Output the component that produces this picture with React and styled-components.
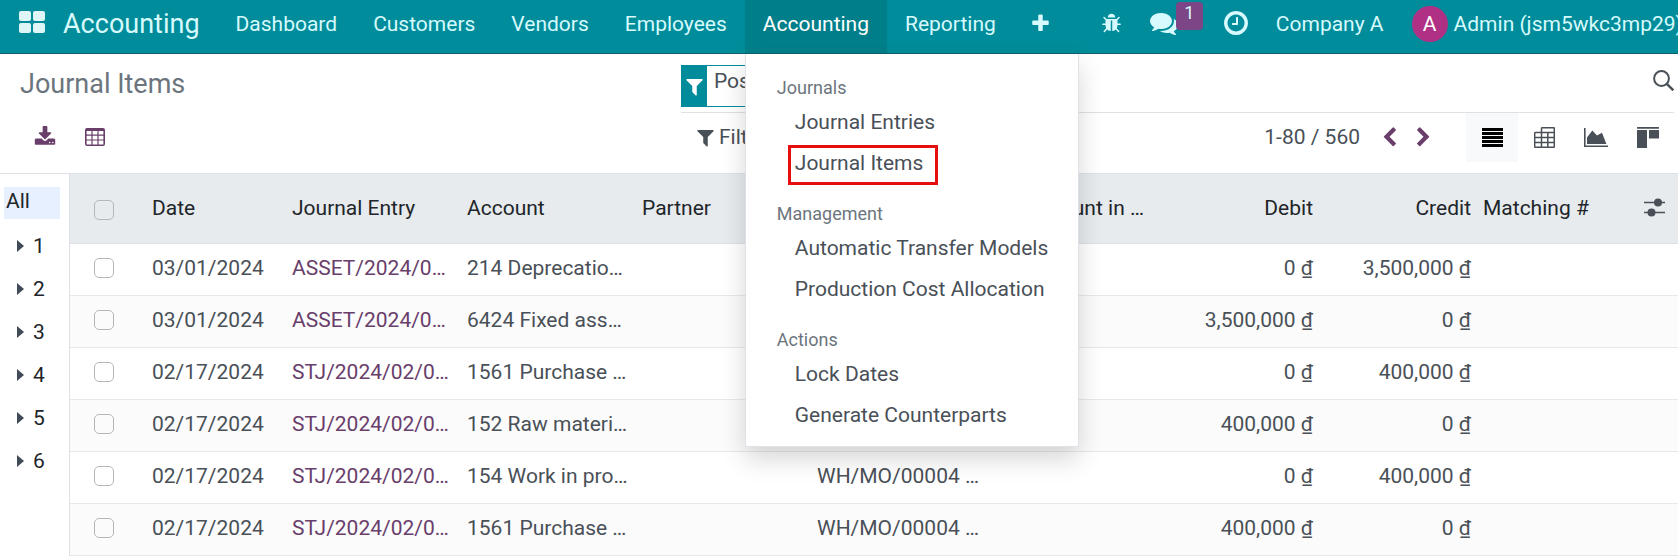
import React from "react";
import styled, { createGlobalStyle, css } from "styled-components";

const teal = "#008c9a";
const line = "#dee2e6";
const plum = "#693e6b";
const ink = "#495057";

const GlobalStyle = createGlobalStyle`
  *, *::before, *::after { box-sizing: border-box; }
  html { overflow: hidden; }
  body {
    margin: 0;
    background: #fff;
    color: ${ink};
    font-family: Roboto, "Noto Sans", sans-serif;
    font-size: 21px;
    line-height: 32px;
  }
  button, input { font: inherit; color: inherit; }
  button { border: 0; padding: 0; background: none; cursor: pointer; }
  a { color: inherit; text-decoration: none; }
`;

const glyphs = {
  filter:
    "M1595 295q17 41-14 70l-493 493v742q0 42-39 59-13 5-25 5-27 0-45-19l-256-256q-19-19-19-45v-486l-493-493q-31-29-14-70 17-39 59-39h1280q42 0 59 39z",
  bug: "M1696 960q0 26-19 45t-45 19h-224q0 171-67 290l208 209q19 19 19 45t-19 45q-18 19-45 19t-45-19l-198-197q-5 5-15 13t-42 28.5-65 36.5-82 29-97 13v-896h-128v896q-51 0-101.5-13.5t-87-33-66-39-43.5-32.5l-15-14-183 207q-20 21-48 21-24 0-43-16-19-18-20.5-44.5t15.5-46.5l202-227q-58-114-58-274h-224q-26 0-45-19t-19-45 19-45 45-19h224v-294l-173-173q-19-19-19-45t19-45 45-19 45 19l173 173h844l173-173q19-19 45-19t45 19 19 45-19 45l-173 173v294h224q26 0 45 19t19 45zm-480-576h-640q0-133 93.5-226.5t226.5-93.5 226.5 93.5 93.5 226.5z",
  comments:
    "M1408 768q0 139-94 257t-256.5 186.5-353.5 68.5q-86 0-176-16-124 88-278 128-36 9-86 16h-3q-11 0-20.5-8t-11.5-21q-1-3-1-6.5t.5-6.5 2-6l2.5-5 3.5-5.5 4-5 4.5-5 4-4.5q5-6 23-25t26-29.5 22.5-29 25-38.5 20.5-44q-124-72-195-177t-71-224q0-139 94-257t256.5-186.5 353.5-68.5 353.5 68.5 256.5 186.5 94 257zm384 256q0 120-71 224.5t-195 176.5q10 24 20.5 44t25 38.5 22.5 29 26 29.5 23 25q1 1 4 4.5t4.5 5 4 5 3.5 5.5l2.5 5 2 6 .5 6.5-1 6.5q-3 14-13 22t-22 7q-50-7-86-16-154-40-278-128-90 16-176 16-271 0-472-132 58 4 88 4 161 0 309-45t264-129q125-92 192-212t67-254q0-77-23-152 129 71 204 178t75 230z",
  clock:
    "M1024 544v448q0 14-9 23t-23 9h-320q-14 0-23-9t-9-23v-64q0-14 9-23t23-9h224v-352q0-14 9-23t23-9h64q14 0 23 9t9 23zm416 352q0-148-73-273t-198-198-273-73-273 73-198 198-73 273 73 273 198 198 273 73 273-73 198-198 73-273zm224 0q0 209-103 385.5t-279.5 279.5-385.5 103-385.5-103-279.5-279.5-103-385.5 103-385.5 279.5-279.5 385.5-103 385.5 103 279.5 279.5 103 385.5z",
  download:
    "M1344 1344q0-26-19-45t-45-19-45 19-19 45 19 45 45 19 45-19 19-45zm256 0q0-26-19-45t-45-19-45 19-19 45 19 45 45 19 45-19 19-45zm128-224v320q0 40-28 68t-68 28h-1472q-40 0-68-28t-28-68v-320q0-40 28-68t68-28h465l135 136q58 56 136 56t136-56l136-136h464q40 0 68 28t28 68zm-325-569q17 41-14 70l-448 448q-18 19-45 19t-45-19l-448-448q-31-29-14-70 17-39 59-39h256v-448q0-26 19-45t45-19h256q26 0 45 19t19 45v448h256q42 0 59 39z",
  plus: "M1600 736v192q0 40-28 68t-68 28h-416v416q0 40-28 68t-68 28h-192q-40 0-68-28t-28-68v-416h-416q-40 0-68-28t-28-68v-192q0-40 28-68t68-28h416v-416q0-40 28-68t68-28h192q40 0 68 28t28 68v416h416q40 0 68 28t28 68z",
  left: "M1427 301l-531 531 531 531q19 19 19 45t-19 45l-166 166q-19 19-45 19t-45-19l-742-742q-19-19-19-45t19-45l742-742q19-19 45-19t45 19l166 166q19 19 19 45t-19 45z",
  right:
    "M1363 877l-742 742q-19 19-45 19t-45-19l-166-166q-19-19-19-45t19-45l531-531-531-531q-19-19-19-45t19-45l166-166q19-19 45-19t45 19l742 742q19 19 19 45t-19 45z",
};

const Svg = styled.svg`
  display: block;
  flex: none;
  fill: currentColor;
`;

const Glyph = ({ name, size = 21 }) => (
  <Svg width={size} height={size} viewBox="0 0 1792 1792" aria-hidden="true">
    <path d={glyphs[name]} />
  </Svg>
);

const AppsIcon = () => (
  <Svg width="26" height="22" viewBox="0 0 26 22" aria-hidden="true">
    <rect width="12" height="10" rx="2" />
    <rect x="14" width="12" height="10" rx="2" />
    <rect y="12" width="12" height="10" rx="2" />
    <rect x="14" y="12" width="12" height="10" rx="2" />
  </Svg>
);

const TableIcon = () => (
  <Svg width="20" height="18" viewBox="0 0 20 18" aria-hidden="true">
    <path
      fillRule="evenodd"
      d="M2 0H18A2 2 0 0 1 20 2V16A2 2 0 0 1 18 18H2A2 2 0 0 1 0 16V2A2 2 0 0 1 2 0ZM1.6 3V6.6H6.4V3ZM7.6 3V6.6H12.4V3ZM13.6 3V6.6H18.4V3ZM1.6 7.8V11.4H6.4V7.8ZM7.6 7.8V11.4H12.4V7.8ZM13.6 7.8V11.4H18.4V7.8ZM1.6 12.6V16.4H6.4V12.6ZM7.6 12.6V16.4H12.4V12.6ZM13.6 12.6V16.4H18.4V12.6Z"
    />
  </Svg>
);

const ListIcon = () => (
  <Svg width="21" height="19" viewBox="0 0 21 19" aria-hidden="true">
    {[0, 4, 8, 12, 16].map((y) => (
      <rect key={y} y={y} width="21" height="3" />
    ))}
  </Svg>
);

const PivotIcon = () => (
  <Svg width="21" height="21" viewBox="0 0 21 21" aria-hidden="true">
    <path
      d="M7.5 5.5V1.5Q7.5.7 8.3.7H19.5Q20.3.7 20.3 1.5V19.5Q20.3 20.3 19.5 20.3H1.5Q.7 20.3.7 19.5V6.3Q.7 5.5 1.5 5.5H20M.7 10.5H20.3M.7 15.5H20.3M7.5 5.5V20.3M13.8 5.5V20.3"
      fill="none"
      stroke="currentColor"
      strokeWidth="1.5"
    />
  </Svg>
);

const AreaIcon = () => (
  <Svg width="24" height="19" viewBox="0 0 24 19" aria-hidden="true">
    <path d="M0 0H1.6V17.4H24V19H0ZM3 16V9.5L8.3 2.4 13 7.4 18 4.8 22.4 16Z" />
  </Svg>
);

const KanbanIcon = () => (
  <Svg width="22" height="21" viewBox="0 0 22 21" aria-hidden="true">
    <path d="M0 0H22V1.8H0ZM0 3H10V21H0ZM12 3H22V11.4H12Z" />
  </Svg>
);

const SearchIcon = () => (
  <Svg width="21" height="21" viewBox="0 0 21 21" aria-hidden="true">
    <g fill="none" stroke="currentColor" strokeWidth="2">
      <circle cx="8.5" cy="8.5" r="7.4" />
      <path d="M13.8 13.8L20.3 20.3" strokeWidth="2.4" />
    </g>
  </Svg>
);

const SlidersIcon = () => (
  <Svg width="21" height="19" viewBox="0 0 21 19" aria-hidden="true">
    <path d="M0 3.7H21V5.3H0ZM0 13.7H21V15.3H0Z" />
    <circle cx="14" cy="4.5" r="4" />
    <circle cx="7.5" cy="14.5" r="4" />
  </Svg>
);

const CaretIcon = () => (
  <Svg width="7" height="12" viewBox="0 0 7 12" aria-hidden="true">
    <path d="M0 0L7 6 0 12Z" />
  </Svg>
);

const Page = styled.div`
  min-height: 100vh;
`;

const Navbar = styled.nav`
  display: flex;
  height: 54px;
  padding-left: 19px;
  background: ${teal};
  border-bottom: 1px solid #0a5f6c;
  color: #d6fafd;
`;

const AppsButton = styled.button`
  display: flex;
  align-items: center;
  padding-bottom: 9px;
  color: #dff6f8;
`;

const Brand = styled.a`
  padding: 8px 18px 0 18px;
  font-size: 27px;
`;

const NavItem = styled.div`
  position: relative;
  flex: none;
  background: ${(p) => (p.$active ? "#007f8a" : "transparent")};
`;

const NavButton = styled.button`
  display: block;
  height: 100%;
  padding: 0 18px 5px;
  color: ${(p) => (p.$active ? "#fff" : "inherit")};
  white-space: nowrap;
`;

const MoreButton = styled(NavButton)`
  padding: 0 18px 7px 16px;
`;

const Systray = styled.div`
  display: flex;
  flex: 1;
  min-width: 0;
  margin-left: 18px;
  overflow: hidden;
`;

const TrayButton = styled.button`
  position: relative;
  display: flex;
  flex: none;
  align-items: center;
  padding: 0 14px 7px;
  white-space: nowrap;
`;

const MessagesButton = styled(TrayButton)`
  padding-right: 30px;
`;

const TrayLabel = styled(TrayButton)`
  padding: 0 14px 5px 12px;
`;

const UserButton = styled(TrayLabel)`
  gap: 6px;
  padding: 0 0 5px 14px;
`;

const Badge = styled.span`
  position: absolute;
  top: 2px;
  left: 40px;
  width: 27px;
  height: 28px;
  border-radius: 4px;
  background: #7c4585;
  font-size: 18px;
  line-height: 21px;
  text-align: center;
`;

const Avatar = styled.span`
  width: 36px;
  height: 36px;
  border-radius: 50%;
  background: #b03085;
  color: #fff;
  line-height: 37px;
  text-align: center;
`;

const Menu = styled.div`
  position: absolute;
  z-index: 10;
  top: 54px;
  left: 0;
  padding: 4px 0 10px;
  background: #fff;
  border: 1px solid ${line};
  border-top: 0;
  box-shadow: 0 12px 24px rgba(0, 0, 0, 0.16);
  white-space: nowrap;
`;

const MenuHeading = styled.div`
  padding: 17px 31px 1px;
  color: #6c757d;
  font-size: 18px;
  line-height: 26px;
`;

const MenuLink = styled.a`
  position: relative;
  display: block;
  padding: 4px 30px 5px 49px;
  color: ${ink};
`;

const Marker = styled.span`
  position: absolute;
  top: 2px;
  left: 42px;
  width: 150px;
  height: 40px;
  border: 3px solid #e60f0f;
`;

const ControlPanel = styled.header`
  display: grid;
  grid-template-columns: minmax(0, 661fr) minmax(0, 993fr);
  grid-template-rows: 59px 60px;
  padding: 0 4px 0 20px;
  border-bottom: 1px solid ${line};
`;

const Title = styled.h1`
  margin: 0;
  padding-top: 14px;
  color: #6c757d;
  font-size: 27px;
  font-weight: 400;
`;

const SearchBar = styled.div`
  display: flex;
  align-items: flex-start;
  padding-top: 11px;
  border-bottom: 1px solid ${line};
`;

const Facet = styled.div`
  display: flex;
  flex: none;
  height: 42px;
  border: 1px solid ${teal};
`;

const FacetIcon = styled.span`
  display: flex;
  align-items: center;
  justify-content: center;
  width: 25px;
  background: ${teal};
  color: #fff;
`;

const FacetText = styled.span`
  padding: 0 7px;
  line-height: 30px;
`;

const SearchInput = styled.input`
  flex: 1;
  min-width: 0;
  height: 40px;
  border: 0;
  outline: 0;
  background: none;
`;

const SearchButton = styled.button`
  padding-top: 5px;
`;

const Actions = styled.div`
  display: flex;
  gap: 29px;
  align-items: center;
  padding: 0 0 12px 14px;
  color: ${plum};
`;

const Tools = styled.div`
  display: flex;
  align-items: flex-start;
  justify-content: space-between;
`;

const FilterButton = styled.button`
  display: flex;
  gap: 3px;
  align-items: center;
  padding: 8px 14px;
`;

const ToolsEnd = styled.div`
  display: flex;
`;

const PagerText = styled.span`
  padding: 8px 12px 0 0;
`;

const PagerButton = styled.button`
  display: flex;
  align-items: center;
  justify-content: center;
  width: 34px;
  height: 48px;
  color: ${plum};
`;

const Switcher = styled.div`
  display: flex;
  margin-left: 26px;
`;

const ViewButton = styled.button`
  display: flex;
  align-items: center;
  justify-content: center;
  width: 52px;
  height: 49px;
  ${(p) =>
    p.$active &&
    css`
      background: #f8f9fa;
      color: #000;
    `}
`;

const Content = styled.main`
  display: flex;
`;

const SidePanel = styled.aside`
  flex: none;
  width: 70px;
  padding: 13px 9px 0 4px;
  border-right: 1px solid ${line};
  color: #212529;
`;

const SideAll = styled.button`
  display: flex;
  width: 100%;
  height: 32px;
  padding-left: 2px;
  background: #e6f0ff;
  line-height: 29px;
`;

const SideItem = styled.button`
  display: flex;
  gap: 9px;
  align-items: center;
  width: 100%;
  height: 32px;
  margin-top: 11px;
  padding-left: 13px;

  svg { color: #414b57; }
`;

const Table = styled.table`
  flex: 1;
  width: 100%;
  min-width: 0;
  table-layout: fixed;
  border-collapse: separate;
  border-spacing: 0;
`;

const Col = styled.col`
  width: ${(p) => (p.$w ? `${p.$w}px` : "auto")};
`;

const HeadCell = styled.th`
  height: 70px;
  padding: 0 6px 2px;
  overflow: hidden;
  background: #e7ebee;
  border-bottom: 1px solid ${line};
  color: #212529;
  font-weight: 400;
  text-align: ${(p) => (p.$end ? "right" : "left")};
  white-space: nowrap;
`;

const CheckHeadCell = styled(HeadCell)`
  padding: 2px 6px 0;
`;

const Row = styled.tr`
  background: ${(p) => (p.$striped ? "#fbfbfb" : "#fff")};
`;

const Cell = styled.td`
  height: 52px;
  padding: 0 6px 4px;
  overflow: hidden;
  border-bottom: 1px solid #e6e8ea;
  color: ${(p) => (p.$link ? plum : ink)};
  text-align: ${(p) => (p.$end ? "right" : "left")};
  white-space: nowrap;
`;

const Check = styled.input`
  display: block;
  appearance: none;
  width: 20px;
  height: 20px;
  margin: 0 0 0 18px;
  border: 1px solid #b4b8bc;
  border-radius: 5px;
`;

const OptionsButton = styled.button`
  display: block;
  margin-left: auto;
  padding-right: 7px;
  color: ${ink};
`;

const menu = [
  ["Journals", ["Journal Entries", "Journal Items"]],
  ["Management", ["Automatic Transfer Models", "Production Cost Allocation"]],
  ["Actions", ["Lock Dates", "Generate Counterparts"]],
];

const rows = [
  ["03/01/2024", "ASSET/2024/0…", "214 Deprecatio…", "", "0 ₫", "3,500,000 ₫"],
  ["03/01/2024", "ASSET/2024/0…", "6424 Fixed ass…", "", "3,500,000 ₫", "0 ₫"],
  ["02/17/2024", "STJ/2024/02/0…", "1561 Purchase …", "", "0 ₫", "400,000 ₫"],
  ["02/17/2024", "STJ/2024/02/0…", "152 Raw materi…", "", "400,000 ₫", "0 ₫"],
  ["02/17/2024", "STJ/2024/02/0…", "154 Work in pro…", "WH/MO/00004 …", "0 ₫", "400,000 ₫"],
  ["02/17/2024", "STJ/2024/02/0…", "1561 Purchase …", "WH/MO/00004 …", "400,000 ₫", "0 ₫"],
];

const NavMenu = () => (
  <Menu>
    {menu.map(([heading, items]) => (
      <React.Fragment key={heading}>
        <MenuHeading>{heading}</MenuHeading>
        {items.map((item) => (
          <MenuLink href="#" key={item}>
            {item}
            {item === "Journal Items" && <Marker />}
          </MenuLink>
        ))}
      </React.Fragment>
    ))}
  </Menu>
);

export default function App() {
  return (
    <Page>
      <GlobalStyle />
      <Navbar>
        <AppsButton aria-label="Apps"><AppsIcon /></AppsButton>
        <Brand href="#">Accounting</Brand>
        {["Dashboard", "Customers", "Vendors", "Employees", "Accounting", "Reporting"].map((name) => {
          const active = name === "Accounting";
          return (
            <NavItem key={name} $active={active}>
              <NavButton $active={active}>{name}</NavButton>
              {active && <NavMenu />}
            </NavItem>
          );
        })}
        <NavItem>
          <MoreButton aria-label="More"><Glyph name="plus" /></MoreButton>
        </NavItem>
        <Systray>
          <TrayButton aria-label="Debug"><Glyph name="bug" /></TrayButton>
          <MessagesButton aria-label="Messages">
            <Glyph name="comments" size={28} />
            <Badge>1</Badge>
          </MessagesButton>
          <TrayButton aria-label="Activities"><Glyph name="clock" size={28} /></TrayButton>
          <TrayLabel>Company A</TrayLabel>
          <UserButton>
            <Avatar>A</Avatar>
            Admin (jsm5wkc3mp29)
          </UserButton>
        </Systray>
      </Navbar>

      <ControlPanel>
        <Title>Journal Items</Title>
        <SearchBar>
          <Facet>
            <FacetIcon><Glyph name="filter" /></FacetIcon>
            <FacetText>Posted</FacetText>
          </Facet>
          <SearchInput aria-label="Search" />
          <SearchButton aria-label="Run search"><SearchIcon /></SearchButton>
        </SearchBar>
        <Actions>
          <button aria-label="Export"><Glyph name="download" size={22} /></button>
          <button aria-label="Spreadsheet"><TableIcon /></button>
        </Actions>
        <Tools>
          <FilterButton><Glyph name="filter" />Filters</FilterButton>
          <ToolsEnd>
            <PagerText>1-80 / 560</PagerText>
            <PagerButton aria-label="Previous"><Glyph name="left" /></PagerButton>
            <PagerButton aria-label="Next"><Glyph name="right" /></PagerButton>
            <Switcher>
              <ViewButton aria-label="List" $active><ListIcon /></ViewButton>
              <ViewButton aria-label="Pivot"><PivotIcon /></ViewButton>
              <ViewButton aria-label="Graph"><AreaIcon /></ViewButton>
              <ViewButton aria-label="Kanban"><KanbanIcon /></ViewButton>
            </Switcher>
          </ToolsEnd>
        </Tools>
      </ControlPanel>

      <Content>
        <SidePanel>
          <SideAll>All</SideAll>
          {[1, 2, 3, 4, 5, 6].map((n) => (
            <SideItem key={n}><CaretIcon />{n}</SideItem>
          ))}
        </SidePanel>
        <Table>
          <colgroup>
            {[76, 140, 175, 175, 175, 175, 164, 169, 158, 0, 70].map((w, i) => (
              <Col key={i} $w={w} />
            ))}
          </colgroup>
          <thead>
            <tr>
              <CheckHeadCell><Check type="checkbox" aria-label="Select all" /></CheckHeadCell>
              <HeadCell>Date</HeadCell>
              <HeadCell>Journal Entry</HeadCell>
              <HeadCell>Account</HeadCell>
              <HeadCell>Partner</HeadCell>
              <HeadCell aria-label="Label" />
              <HeadCell $end>Amount in …</HeadCell>
              <HeadCell $end>Debit</HeadCell>
              <HeadCell $end>Credit</HeadCell>
              <HeadCell>Matching #</HeadCell>
              <HeadCell><OptionsButton aria-label="Columns"><SlidersIcon /></OptionsButton></HeadCell>
            </tr>
          </thead>
          <tbody>
            {rows.map(([date, entry, account, label, debit, credit], i) => (
              <Row key={i} $striped={i % 2 === 1}>
                <Cell><Check type="checkbox" aria-label={`Select row ${i + 1}`} /></Cell>
                <Cell>{date}</Cell>
                <Cell $link>{entry}</Cell>
                <Cell>{account}</Cell>
                <Cell />
                <Cell>{label}</Cell>
                <Cell />
                <Cell $end>{debit}</Cell>
                <Cell $end>{credit}</Cell>
                <Cell />
                <Cell />
              </Row>
            ))}
          </tbody>
        </Table>
      </Content>
    </Page>
  );
}
